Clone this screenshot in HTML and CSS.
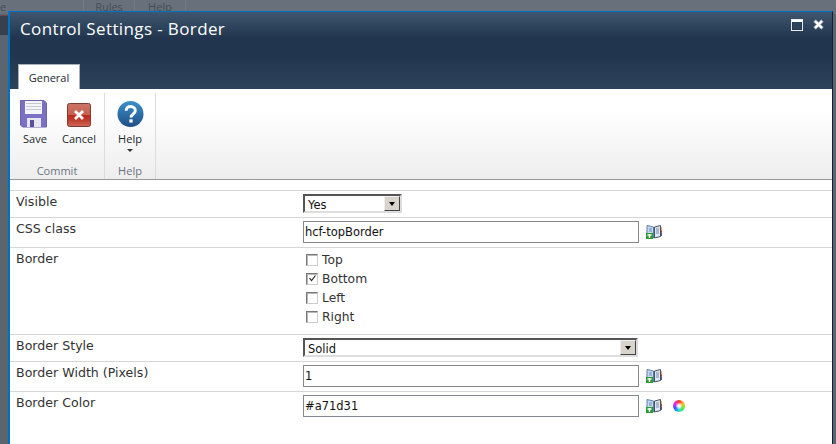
FILE: index.html
```html
<!DOCTYPE html>
<html lang="en">
<head>
  <meta charset="UTF-8">
  <title>Control Settings - Border</title>
  <meta name="viewport" content="width=device-width, initial-scale=1.0">
  <link rel="stylesheet" href="styles.css">
</head>
<body>

  <div class="backdrop">
    <div class="backdrop-bar">
      <span class="backdrop-item backdrop-first">e</span>
      <span class="backdrop-item">Rules</span>
      <span class="backdrop-item">Help</span>
    </div>
    <div class="backdrop-band"></div>
  </div>

  <div class="dialog">
    <div class="dialog-head">
      <div class="title-row">
        <h1>Control Settings - Border</h1>
        <div class="window-btns">
          <svg width="12" height="12" viewBox="0 0 12 12"><rect x="0.5" y="0.5" width="11" height="11" fill="#24394f" stroke="#e8eaec"/><rect x="1" y="1" width="10" height="2" fill="#fff"/><rect x="2" y="3" width="8" height="7" fill="#2c435c"/></svg>
          <svg width="11" height="11" viewBox="0 0 11 11"><path d="M1.5 1.5 L9.5 9.5 M9.5 1.5 L1.5 9.5" stroke="#8f98a1" stroke-width="3.6"/><path d="M2 2 L9 9 M9 2 L2 9" stroke="#fff" stroke-width="2.4"/></svg>
        </div>
      </div>
      <div class="tab">General</div>
    </div>

    <div class="ribbon">
      <div class="group group-commit">
        <div class="group-btns">
          <div class="rb rb-save">
            <svg class="save-icon" width="27" height="28" viewBox="0 0 27 28">
              <path d="M0.5 0.5 H24 L26.5 3 V27 H2.5 L0.5 25 Z" fill="#7c70c4" stroke="#6d62b0"/>
              <rect x="5" y="1" width="17" height="13" fill="#f5f5f9"/>
              <path d="M6 3.5 H21 M6 6.5 H21 M6 9.5 H21" stroke="#c6c8d6"/>
              <rect x="7" y="18" width="14" height="9" fill="#e6e6f0"/>
              <rect x="10" y="20" width="4" height="7" fill="#5a4f9e"/>
            </svg>
            <span>Save</span>
          </div>
          <div class="rb rb-cancel">
            <svg width="24" height="28" viewBox="0 0 24 28">
              <defs><linearGradient id="cancelfill" x1="0" y1="0" x2="0" y2="1"><stop offset="0" stop-color="#c87568"/><stop offset="0.5" stop-color="#c9604f"/><stop offset="0.52" stop-color="#bb2a1b"/><stop offset="0.7" stop-color="#c23a2a"/><stop offset="1" stop-color="#c96a5c"/></linearGradient></defs>
              <rect x="0.5" y="3.5" width="23" height="23" rx="2" fill="url(#cancelfill)" stroke="#7e3a33"/>
              <path d="M8 11 L16 19 M16 11 L8 19" stroke="#fff" stroke-width="2.8"/>
            </svg>
            <span>Cancel</span>
          </div>
        </div>
        <div class="group-name">Commit</div>
      </div>
      <div class="group group-help">
        <div class="group-btns">
          <div class="rb rb-help">
            <svg width="27" height="28" viewBox="0 0 28 28">
              <defs><linearGradient id="helpfill" x1="0" y1="0" x2="0" y2="1"><stop offset="0" stop-color="#3e8fc9"/><stop offset="1" stop-color="#1f4f86"/></linearGradient></defs>
              <circle cx="14" cy="14" r="13.5" fill="url(#helpfill)"/>
              <path d="M9.5 10.5 C9.5 4.5 19 5 19 10.5 C19 14 14.5 14 14.5 17.5" fill="none" stroke="#fff" stroke-width="3"/>
              <rect x="12.8" y="19.5" width="3.4" height="3.4" fill="#fff"/>
            </svg>
            <span>Help</span>
            <i class="arrow"></i>
          </div>
        </div>
        <div class="group-name">Help</div>
      </div>
    </div>

    <div class="form">
      <div class="row row-visible">
        <label>Visible</label>
        <div class="field">
          <div class="select select-short"><span>Yes</span><b class="select-btn"><i></i></b></div>
        </div>
      </div>
      <div class="row row-input">
        <label>CSS class</label>
        <div class="field">
          <input class="text" type="text" value="hcf-topBorder">
          <svg class="book" width="16" height="14" viewBox="0 0 16 14"><use href="#book"/></svg>
        </div>
      </div>
      <div class="row row-checks">
        <label>Border</label>
        <div class="checks">
          <div class="check"><i class="box"></i>Top</div>
          <div class="check"><i class="box"><svg width="9" height="9" viewBox="0 0 9 9"><path d="M1.5 4 L3.5 6.5 L7.5 1.5" fill="none" stroke="#222" stroke-width="1.2"/></svg></i>Bottom</div>
          <div class="check"><i class="box"></i>Left</div>
          <div class="check"><i class="box"></i>Right</div>
        </div>
      </div>
      <div class="row row-visible">
        <label>Border Style</label>
        <div class="field">
          <div class="select select-long"><span>Solid</span><b class="select-btn"><i></i></b></div>
        </div>
      </div>
      <div class="row row-input">
        <label>Border Width (Pixels)</label>
        <div class="field">
          <input class="text" type="text" value="1">
          <svg class="book" width="16" height="14" viewBox="0 0 16 14"><use href="#book"/></svg>
        </div>
      </div>
      <div class="row row-input row-last">
        <label>Border Color</label>
        <div class="field">
          <input class="text" type="text" value="#a71d31">
          <svg class="book" width="16" height="14" viewBox="0 0 16 14"><use href="#book"/></svg>
          <i class="wheel"></i>
        </div>
      </div>
    </div>
  </div>

  <svg width="0" height="0" class="defs">
    <symbol id="book" viewBox="0 0 16 14">
      <path d="M1 0.5 L7.5 2 V13 L1 11.5 Z" fill="#c4d8ee" stroke="#5f7fa8"/>
      <path d="M8.5 2 L14.5 0.5 V11.5 L8.5 13 Z" fill="#dfe6f0" stroke="#46506a"/>
      <path d="M3 4 H6 M3 6 H6 M10 4 H13 M10 6 H13 M10 8 H13" stroke="#6f8fb8"/>
      <path d="M15.5 2 V5" stroke="#e0c030"/>
      <path d="M15.5 5 V8" stroke="#d04848"/>
      <path d="M15.5 8 V11" stroke="#3a5ea8"/>
      <rect x="0" y="8" width="7" height="6" fill="#2c9a34"/>
      <path d="M1.5 10 H5.5 M3.5 9 V13" stroke="#fff" stroke-width="1.4"/>
    </symbol>
  </svg>

</body>
</html>
```

FILE: styles.css
```css
* { box-sizing: border-box; }

html, body {
  margin: 0;
  padding: 0;
  height: 100%;
  overflow: hidden;
}

body {
  position: relative;
  background-color: #5b6570;
  font-family: 'DejaVu Sans', Verdana, sans-serif;
  color: #333;
}

.defs {
  position: absolute;
}

.backdrop-bar {
  display: flex;
  height: 14px;
  background-color: #68707b;
  font-family: 'Open Sans', sans-serif;
  font-size: 11px;
  color: #464d55;
  line-height: 14px;
}

.backdrop-item {
  width: 51px;
  text-align: center;
  border-right: 1px solid #747b85;
}

.backdrop-first {
  width: 84px;
  text-align: left;
}

.backdrop-band {
  width: 8px;
  height: 20px;
  margin-top: 1px;
  background-color: #37414e;
  border-top: 1px solid #6b4a4e;
}

.dialog {
  position: absolute;
  left: 8px;
  top: 11px;
  width: 825px;
  height: 440px;
  border: 1px solid #0072c6;
  border-left: 2px solid #0072c6;
  border-right: 1px solid #0a2238;
  background-color: #fff;
}

.dialog-head {
  height: 77px;
  padding: 0 8px;
  background: linear-gradient(#3f566f 0, #21364e 26px, #21364e 44px, #2d435a 77px);
  display: flex;
  flex-direction: column;
  justify-content: space-between;
}

.title-row {
  display: flex;
  justify-content: space-between;
  padding-top: 5px;
}

h1 {
  margin: 0 0 0 2px;
  font-family: 'Open Sans', sans-serif;
  font-weight: 400;
  font-size: 17px;
  line-height: 24px;
  color: #fff;
  letter-spacing: 0.38px;
}

.window-btns {
  display: flex;
  gap: 10px;
  padding-top: 2px;
  height: 15px;
}

.tab {
  width: 62px;
  height: 25px;
  background-color: #fff;
  border: 1px solid #a9b2bb;
  border-bottom: none;
  text-align: center;
  font-family: 'Open Sans', sans-serif;
  font-size: 11px;
  line-height: 25px;
  color: #23282e;
}

.ribbon {
  display: flex;
  height: 91px;
  padding-top: 4px;
  background: linear-gradient(#fff 0, #fff 20px, #eeeeee 88px);
  border-bottom: 1px solid #9a9a9a;
}

.group {
  display: flex;
  flex-direction: column;
  justify-content: space-between;
  border-right: 1px solid #dcdcdc;
}

.group-commit { width: 95px; }
.group-help { width: 51px; }

.group-btns {
  display: flex;
  padding-left: 9px;
  gap: 10px;
}

.rb {
  display: flex;
  flex-direction: column;
  align-items: center;
  width: 32px;
  padding-top: 7px;
  font-family: 'Open Sans', sans-serif;
  font-size: 11px;
  color: #23282e;
}

.rb-cancel { width: 36px; }

.rb span {
  margin-top: 3px;
  line-height: 15px;
}

.rb svg {
  flex-shrink: 0;
}

.rb .save-icon {
  margin-right: 3px;
}

.arrow {
  width: 0;
  height: 0;
  margin-top: 3px;
  border: 3px solid transparent;
  border-top: 3px solid #333;
}

.group-name {
  text-align: center;
  font-family: 'Open Sans', sans-serif;
  font-size: 11px;
  line-height: 16px;
  color: #6a7480;
}

.form {
  margin-top: 10px;
  border-top: 1px solid #d6d6d6;
}

.row {
  display: flex;
  border-bottom: 1px solid #d6d6d6;
  font-size: 12.6px;
}

.row label {
  width: 293px;
  padding: 2px 0 0 6px;
  line-height: 17px;
  color: #333;
}

.row-visible { height: 27px; }
.row-input { height: 30px; }
.row-checks { height: 87px; }
.row-last { border-bottom: none; }

.field {
  display: flex;
  align-items: flex-start;
  padding-top: 3px;
}

.select {
  display: flex;
  justify-content: space-between;
  align-items: center;
  height: 19px;
  padding-left: 3px;
  background-color: #fff;
  border: 2px solid;
  border-color: #555 #ddd #ddd #555;
  font-size: 11.5px;
  color: #111;
}

.select span {
  padding-top: 2px;
}

.select-short { width: 99px; }
.select-long { width: 335px; }

.select-btn {
  display: flex;
  align-items: center;
  justify-content: center;
  width: 16px;
  height: 15px;
  background-color: #d8d4cc;
  border: 1px solid;
  border-color: #eee #444 #444 #eee;
}

.select-btn i {
  width: 0;
  height: 0;
  margin-top: 3px;
  border: 3px solid transparent;
  border-top: 4px solid #000;
}

.text {
  width: 336px;
  height: 22px;
  margin: 0;
  padding: 0 1px;
  border: 1px solid #84888c;
  background-color: #fff;
  font-family: 'DejaVu Sans', Verdana, sans-serif;
  font-size: 11.5px;
  color: #111;
}

.book {
  margin: 4px 0 0 7px;
}

.wheel {
  width: 12px;
  height: 12px;
  margin: 5px 0 0 11px;
  border-radius: 50%;
  background: radial-gradient(#fff 10%, transparent 45%), conic-gradient(#f33, #fb2, #5e3, #2dd, #35f, #e2e, #f33);
}

.checks {
  padding-top: 2px;
}

.check {
  display: flex;
  align-items: center;
  height: 19px;
  font-size: 12.3px;
  color: #333;
}

.box {
  display: flex;
  align-items: center;
  justify-content: center;
  width: 12px;
  height: 12px;
  margin: 0 4px 0 3px;
  background-color: #fff;
  border: 1px solid;
  border-color: #777 #ccc #ccc #777;
  box-shadow: inset 1px 1px 0 #b8b8b8;
}
```
